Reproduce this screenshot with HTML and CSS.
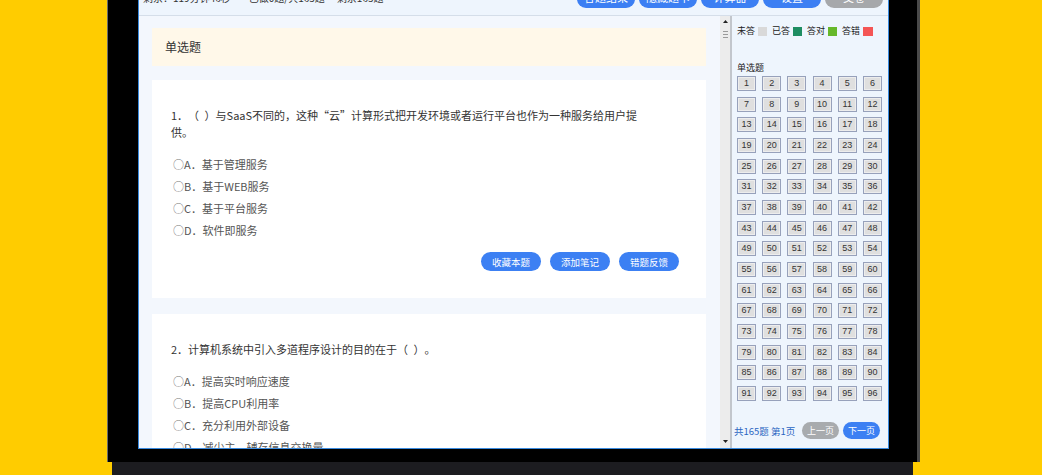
FILE: index.html
```html
<!DOCTYPE html>
<html lang="zh-CN">
<head>
<meta charset="utf-8">
<title>在线考试</title>
<link rel="stylesheet" href="styles.css">
</head>
<body>
<div class="laptop">
  <div class="bezel">
    <div class="screen">
      <header class="topbar">
        <div class="status">
          <span class="stat stat-time">剩余：119分钟46秒</span>
          <span class="stat stat-done">已做0题/共165题</span>
          <span class="stat">剩余165题</span>
        </div>
        <div class="tools">
          <button class="tool">答题结束</button>
          <button class="tool">隐藏题卡</button>
          <button class="tool">计算器</button>
          <button class="tool">设置</button>
          <button class="tool tool-gray">交卷</button>
        </div>
      </header>
      <div class="workspace">
        <main class="paper">
          <div class="section-title">单选题</div>
          <article class="qcard">
            <p class="question">1．（&ensp;）与SaaS不同的，这种“云”计算形式把开发环境或者运行平台也作为一种服务给用户提供。</p>
            <ul class="options">
              <li class="option"><span class="radio">○</span>A．基于管理服务</li>
              <li class="option"><span class="radio">○</span>B．基于WEB服务</li>
              <li class="option"><span class="radio">○</span>C．基于平台服务</li>
              <li class="option"><span class="radio">○</span>D．软件即服务</li>
            </ul>
            <div class="actions">
              <button class="action">收藏本题</button>
              <button class="action">添加笔记</button>
              <button class="action">错题反馈</button>
            </div>
          </article>
          <article class="qcard">
            <p class="question">2．计算机系统中引入多道程序设计的目的在于（&ensp;）。</p>
            <ul class="options">
              <li class="option"><span class="radio">○</span>A．提高实时响应速度</li>
              <li class="option"><span class="radio">○</span>B．提高CPU利用率</li>
              <li class="option"><span class="radio">○</span>C．充分利用外部设备</li>
              <li class="option"><span class="radio">○</span>D．减少主、辅存信息交换量</li>
            </ul>
          </article>
        </main>
        <div class="scrollbar">
          <svg class="arrow" width="5" height="3" viewBox="0 0 5 3"><path d="M0 3 L2.5 0 L5 3 Z" fill="#222"/></svg>
          <div class="thumb"></div>
          <svg class="arrow arrow-down" width="5" height="3" viewBox="0 0 5 3"><path d="M0 0 L5 0 L2.5 3 Z" fill="#222"/></svg>
        </div>
        <aside class="sheet">
          <div class="legend">
            <span class="legend-item">未答<i class="swatch sw-none"></i></span>
            <span class="legend-item">已答<i class="swatch sw-done"></i></span>
            <span class="legend-item">答对<i class="swatch sw-right"></i></span>
            <span class="legend-item">答错<i class="swatch sw-wrong"></i></span>
          </div>
          <div class="sheet-label">单选题</div>
          <div class="grid">
            <span class="cell">1</span><span class="cell">2</span><span class="cell">3</span><span class="cell">4</span><span class="cell">5</span><span class="cell">6</span>
            <span class="cell">7</span><span class="cell">8</span><span class="cell">9</span><span class="cell">10</span><span class="cell">11</span><span class="cell">12</span>
            <span class="cell">13</span><span class="cell">14</span><span class="cell">15</span><span class="cell">16</span><span class="cell">17</span><span class="cell">18</span>
            <span class="cell">19</span><span class="cell">20</span><span class="cell">21</span><span class="cell">22</span><span class="cell">23</span><span class="cell">24</span>
            <span class="cell">25</span><span class="cell">26</span><span class="cell">27</span><span class="cell">28</span><span class="cell">29</span><span class="cell">30</span>
            <span class="cell">31</span><span class="cell">32</span><span class="cell">33</span><span class="cell">34</span><span class="cell">35</span><span class="cell">36</span>
            <span class="cell">37</span><span class="cell">38</span><span class="cell">39</span><span class="cell">40</span><span class="cell">41</span><span class="cell">42</span>
            <span class="cell">43</span><span class="cell">44</span><span class="cell">45</span><span class="cell">46</span><span class="cell">47</span><span class="cell">48</span>
            <span class="cell">49</span><span class="cell">50</span><span class="cell">51</span><span class="cell">52</span><span class="cell">53</span><span class="cell">54</span>
            <span class="cell">55</span><span class="cell">56</span><span class="cell">57</span><span class="cell">58</span><span class="cell">59</span><span class="cell">60</span>
            <span class="cell">61</span><span class="cell">62</span><span class="cell">63</span><span class="cell">64</span><span class="cell">65</span><span class="cell">66</span>
            <span class="cell">67</span><span class="cell">68</span><span class="cell">69</span><span class="cell">70</span><span class="cell">71</span><span class="cell">72</span>
            <span class="cell">73</span><span class="cell">74</span><span class="cell">75</span><span class="cell">76</span><span class="cell">77</span><span class="cell">78</span>
            <span class="cell">79</span><span class="cell">80</span><span class="cell">81</span><span class="cell">82</span><span class="cell">83</span><span class="cell">84</span>
            <span class="cell">85</span><span class="cell">86</span><span class="cell">87</span><span class="cell">88</span><span class="cell">89</span><span class="cell">90</span>
            <span class="cell">91</span><span class="cell">92</span><span class="cell">93</span><span class="cell">94</span><span class="cell">95</span><span class="cell">96</span>
          </div>
          <div class="pager">
            <span class="pager-info">共165题 第1页</span>
            <button class="page-btn page-prev">上一页</button>
            <button class="page-btn page-next">下一页</button>
          </div>
        </aside>
      </div>
    </div>
  </div>
  <div class="base"></div>
</div>
</body>
</html>
```
FILE: styles.css
```css
html, body {
  margin: 0;
  padding: 0;
}
body {
  background: #ffcc00;
  height: 475px;
  overflow: hidden;
  font-family: "Noto Sans CJK SC", "Liberation Sans", sans-serif;
  color: #333;
  text-spacing-trim: space-all;
  font-feature-settings: "chws" 0, "halt" 0;
}
button {
  font-family: "Noto Sans CJK SC", "Liberation Sans", sans-serif;
  border: 0;
  padding: 0;
  cursor: pointer;
}

.laptop {
  width: 813px;
  margin: -40px 0 0 107px;
}
.bezel {
  background: #000;
  border-left: 1px solid #6a6a6a;
  border-right: 3px solid #4a4a4a;
  padding: 18px 28px 13px 30px;
}
.base {
  height: 15px;
  margin: 0 7px 0 5px;
  background: #1c1c20;
}

.screen {
  border: 1px solid #3a8be0;
  background: #f3f7fd;
  display: flex;
  flex-direction: column;
}

/* top bar */
.topbar {
  height: 36px;
  border-bottom: 1px solid #d5dee9;
  background: #eef5fd;
  display: flex;
  align-items: center;
  justify-content: space-between;
  padding: 0 5px 0 4px;
}
.status {
  font-size: 10px;
  color: #333;
  display: flex;
}
.stat-time { margin-right: 18px; }
.stat-done { margin-right: 12px; }
.tools {
  display: flex;
  gap: 4px;
}
.tool {
  width: 58px;
  height: 22px;
  border-radius: 9px;
  background: #3c7ff3;
  color: #fff;
  font-size: 11px;
}
.tool-gray {
  background: #a6a8ab;
}

/* workspace */
.workspace {
  display: flex;
  height: 432px;
}
.paper {
  width: 581px;
  box-sizing: border-box;
  padding: 12px 14px 0 13px;
  overflow: hidden;
  background: #f3f7fd;
}
.section-title {
  height: 38px;
  line-height: 38px;
  padding-left: 13px;
  background: #fff8e9;
  font-size: 12px;
  color: #333;
  margin-bottom: 14px;
}
.qcard {
  background: #fff;
  padding: 27px 27px 27px 19px;
  margin-bottom: 16px;
}
.question {
  margin: 0 0 12px;
  max-width: 478px;
  font-size: 11px;
  line-height: 17px;
  color: #333;
}
.options {
  list-style: none;
  margin: 0;
  padding: 0 0 0 2px;
}
.option {
  height: 22px;
  line-height: 22px;
  font-size: 11px;
  color: #555;
}
.radio {
  color: #777;
}
.actions {
  display: flex;
  justify-content: flex-end;
  gap: 9px;
  margin-top: 11px;
}
.action {
  width: 60px;
  height: 19px;
  border-radius: 10px;
  background: #3c80f3;
  color: #fff;
  font-size: 9.5px;
}

/* scrollbar */
.scrollbar {
  width: 10px;
  background: #ececec;
  display: flex;
  flex-direction: column;
  align-items: center;
  padding: 4px 0 5px;
  box-sizing: border-box;
}
.thumb {
  width: 8px;
  height: 12px;
  margin-top: 4px;
  background: repeating-linear-gradient(#ececec 0 2px, #9a9a9a 2px 3px);
  background-size: 5px 9px;
  background-repeat: no-repeat;
  background-position: center;
}
.arrow-down {
  margin-top: auto;
}

/* answer sheet */
.sheet {
  width: 158px;
  box-sizing: border-box;
  border-left: 2px solid #c2c6cc;
  background: #eef5fd;
  padding: 10px 8px 9px 5px;
  display: flex;
  flex-direction: column;
}
.legend {
  display: flex;
  align-items: center;
  height: 10px;
  font-size: 9px;
  line-height: 10px;
  color: #222;
  white-space: nowrap;
}
.legend-item {
  display: flex;
  align-items: center;
  flex-shrink: 0;
  margin-right: 5px;
}
.swatch {
  display: inline-block;
  flex-shrink: 0;
  width: 9px;
  height: 9px;
  margin-left: 3px;
}
.sw-none { background: #d9d9d9; }
.sw-done { background: #1e8d62; }
.sw-right { background: #66b82a; }
.sw-wrong { background: #f45555; width: 10px; }

.sheet-label {
  margin-top: 27px;
  font-size: 9px;
  line-height: 10px;
  color: #222;
}
.grid {
  margin-top: 3px;
  display: grid;
  grid-template-columns: repeat(6, 19px);
  grid-auto-rows: 15px;
  column-gap: 6.2px;
  row-gap: 5.67px;
}
.cell {
  box-sizing: border-box;
  border: 1px solid #97a1bb;
  background: #dfdfdf;
  box-shadow: inset 0 0 0 1px #ededed;
  font-family: "Liberation Sans", sans-serif;
  font-size: 9px;
  line-height: 13px;
  text-align: center;
  color: #333;
}
.pager {
  margin-top: auto;
  margin-left: -3px;
  display: flex;
  align-items: center;
  gap: 4px;
}
.pager-info {
  font-size: 9.5px;
  color: #2b66c2;
  margin-right: auto;
}
.page-btn {
  width: 37px;
  height: 17px;
  border-radius: 9px;
  color: #fff;
  font-size: 9px;
}
.page-prev { background: #a8abae; }
.page-next { background: #3c80f3; }
```
